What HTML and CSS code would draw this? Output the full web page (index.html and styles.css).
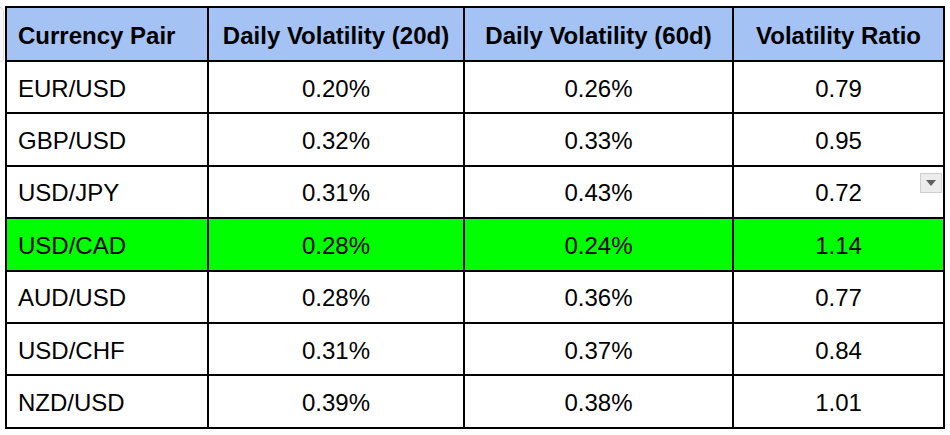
FILE: index.html
```html
<!DOCTYPE html>
<html>
<head>
<meta charset="utf-8">
<link rel="stylesheet" href="styles.css">
</head>
<body>
<div class="sheet">
  <div class="edge"></div>
  <table class="vol">
    <colgroup>
      <col class="c1"><col class="c2"><col class="c3"><col class="c4">
    </colgroup>
    <thead>
      <tr class="head">
        <th class="left">Currency Pair</th>
        <th>Daily Volatility (20d)</th>
        <th>Daily Volatility (60d)</th>
        <th>Volatility Ratio</th>
      </tr>
    </thead>
    <tbody>
      <tr><td class="left">EUR/USD</td><td>0.20%</td><td>0.26%</td><td>0.79</td></tr>
      <tr><td class="left">GBP/USD</td><td>0.32%</td><td>0.33%</td><td>0.95</td></tr>
      <tr><td class="left">USD/JPY</td><td>0.31%</td><td>0.43%</td><td class="ddcell">0.72<span class="dd"><span class="tri"></span></span></td></tr>
      <tr class="hl"><td class="left">USD/CAD</td><td>0.28%</td><td>0.24%</td><td>1.14</td></tr>
      <tr><td class="left">AUD/USD</td><td>0.28%</td><td>0.36%</td><td>0.77</td></tr>
      <tr><td class="left">USD/CHF</td><td>0.31%</td><td>0.37%</td><td>0.84</td></tr>
      <tr><td class="left">NZD/USD</td><td>0.39%</td><td>0.38%</td><td>1.01</td></tr>
    </tbody>
  </table>
</div>
</body>
</html>
```

FILE: styles.css
```css
html, body {
  margin: 0;
  padding: 0;
  background: #ffffff;
}
.sheet {
  position: relative;
  padding: 6px 0 0 5px;
}
.edge {
  position: absolute;
  left: -3px;
  top: 7px;
  width: 5px;
  height: 53px;
  border: 1px solid #dcdcdc;
  border-radius: 4px;
  background: #f8f8f8;
}
.vol {
  border-collapse: collapse;
  table-layout: fixed;
  width: 940px;
  font-family: "Liberation Sans", Arial, sans-serif;
  font-size: 24px;
  color: #000;
}
.c1 { width: 202px; }
.c2 { width: 256px; }
.c3 { width: 269px; }
.c4 { width: 211px; }
.vol th, .vol td {
  border: 2px solid #000;
  text-align: center;
  vertical-align: middle;
  padding: 3px 8px 0;
  white-space: nowrap;
}
.vol th {
  font-weight: bold;
  background: #a4c2f4;
}
.vol .left {
  text-align: left;
  padding-left: 11px;
}
.head { height: 54px; }
.vol tbody tr { height: 52.4px; }
.hl td { background: #00ff00; }
.ddcell { position: relative; }
.dd {
  position: absolute;
  right: 1px;
  top: 6px;
  width: 22px;
  height: 20px;
  background: #ececec;
  border: 1px solid #cfcfcf;
  box-sizing: border-box;
  display: flex;
  align-items: center;
  justify-content: center;
}
.tri {
  width: 0;
  height: 0;
  border-left: 5px solid transparent;
  border-right: 5px solid transparent;
  border-top: 6px solid #5f5f5f;
}
```
